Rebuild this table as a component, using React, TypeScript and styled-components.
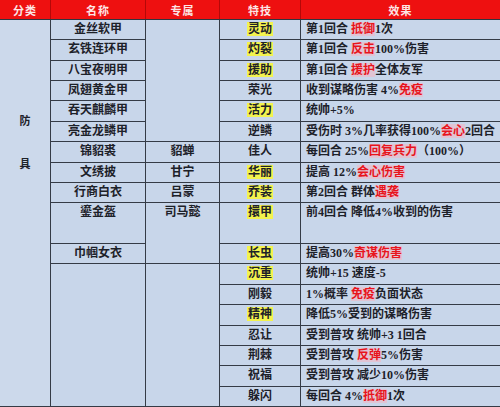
import React from "react";
import styled, { createGlobalStyle } from "styled-components";

const GlobalStyle = createGlobalStyle`
  html, body {
    margin: 0;
    padding: 0;
    background: #c8d6ea;
  }
  body {
    font-family: "Liberation Serif", "Noto Sans CJK SC", serif;
  }
`;

const COLUMNS = "50px 94px 73px 80px 199px";

const Sheet = styled.div`
  width: 500px;
  height: 407px;
  overflow: hidden;
  display: flex;
  flex-direction: column;
`;

const HeaderRow = styled.div`
  display: grid;
  grid-template-columns: ${COLUMNS};
  column-gap: 1px;
  height: 19px;
  background: #b50808;
  border-bottom: 1px solid #2f3540;
`;

const HeadCell = styled.div`
  background: #ee1010;
  color: #fde6e6;
  font-family: "Noto Sans CJK SC", sans-serif;
  font-weight: 700;
  font-size: 11px;
  display: flex;
  align-items: center;
  justify-content: center;
  letter-spacing: 1px;
`;

const Body = styled.div`
  flex: 1;
  display: grid;
  grid-template-columns: ${COLUMNS};
  grid-template-rows: repeat(19, 1fr);
  grid-auto-flow: column dense;
  gap: 1px;
  background: #353b46;
  border-bottom: 1px solid #353b46;
`;

const CategoryCell = styled.div`
  grid-column: 1;
  grid-row: span 19;
  background: #ccd9eb;
  display: flex;
  flex-direction: column;
  align-items: center;
  padding-top: 92px;
  gap: 27px;
  color: #1d2129;
  font-family: "Noto Sans CJK SC", sans-serif;
  font-weight: 700;
  font-size: 11px;
`;

const Cell = styled.div<{ $col: number; $span?: number; $left?: boolean }>`
  grid-column: ${(p) => p.$col};
  grid-row: span ${(p) => p.$span ?? 1};
  background: #c8d6ea;
  color: #1d2129;
  font-weight: 700;
  font-size: 12px;
  line-height: 19px;
  white-space: nowrap;
  text-align: ${(p) => (p.$left ? "left" : "center")};
  padding-left: ${(p) => (p.$left ? "5px" : "0")};
`;

const Trait = styled.span<{ $hl?: boolean }>`
  background: ${(p) => (p.$hl ? "#f3f34e" : "transparent")};
  padding: 0 1px;
`;

const Red = styled.span`
  color: #e8141c;
  background: rgba(255, 175, 185, 0.45);
`;

type Item = { text: string; span?: number };

const gear: Item[] = [
  { text: "金丝软甲" },
  { text: "玄铁连环甲" },
  { text: "八宝夜明甲" },
  { text: "凤翅黄金甲" },
  { text: "吞天麒麟甲" },
  { text: "亮金龙鳞甲" },
  { text: "锦貂裘" },
  { text: "文绣披" },
  { text: "行商白衣" },
  { text: "鎏金盔", span: 2 },
  { text: "巾帼女衣" },
  { text: "", span: 7 },
];

const heroes: Item[] = [
  { text: "", span: 6 },
  { text: "貂蝉" },
  { text: "甘宁" },
  { text: "吕蒙" },
  { text: "司马懿", span: 3 },
  { text: "", span: 7 },
];

// [红字] marks the red highlighted words in an effect
const traits: { name: string; hl?: boolean; effect: string; span?: number }[] = [
  { name: "灵动", hl: true, effect: "第1回合 [抵御]1次" },
  { name: "灼裂", hl: true, effect: "第1回合 [反击]100%伤害" },
  { name: "援助", hl: true, effect: "第1回合 [援护]全体友军" },
  { name: "荣光", effect: "收到谋略伤害 4%[免疫]" },
  { name: "活力", hl: true, effect: "统帅+5%" },
  { name: "逆鳞", effect: "受伤时 3%几率获得100%[会心]2回合" },
  { name: "佳人", effect: "每回合 25%[回复兵力]（100%）" },
  { name: "华丽", hl: true, effect: "提高 12%[会心伤害]" },
  { name: "乔装", hl: true, effect: "第2回合 群体[遇袭]" },
  { name: "擐甲", hl: true, effect: "前4回合 降低4%收到的伤害", span: 2 },
  { name: "长虫", hl: true, effect: "提高30%[奇谋伤害]" },
  { name: "沉重", hl: true, effect: "统帅+15 速度-5" },
  { name: "刚毅", effect: "1%概率 [免疫]负面状态" },
  { name: "精神", hl: true, effect: "降低5%受到的谋略伤害" },
  { name: "忍让", effect: "受到普攻 统帅+3 1回合" },
  { name: "荆棘", effect: "受到普攻 [反弹]5%伤害" },
  { name: "祝福", effect: "受到普攻 减少10%伤害" },
  { name: "躲闪", effect: "每回合 4%[抵御]1次" },
];

const renderEffect = (effect: string) =>
  effect
    .split(/(\[[^\]]+\])/)
    .map((part, i) =>
      part.startsWith("[") ? <Red key={i}>{part.slice(1, -1)}</Red> : part
    );

export default function App() {
  return (
    <Sheet>
      <GlobalStyle />
      <HeaderRow>
        {["分类", "名称", "专属", "特技", "效果"].map((h) => (
          <HeadCell key={h}>{h}</HeadCell>
        ))}
      </HeaderRow>
      <Body>
        <CategoryCell>
          <span>防</span>
          <span>具</span>
        </CategoryCell>
        {gear.map((g, i) => (
          <Cell key={`g${i}`} $col={2} $span={g.span}>
            {g.text}
          </Cell>
        ))}
        {heroes.map((h, i) => (
          <Cell key={`h${i}`} $col={3} $span={h.span}>
            {h.text}
          </Cell>
        ))}
        {traits.map((t) => (
          <Cell key={`t${t.name}`} $col={4} $span={t.span}>
            <Trait $hl={t.hl}>{t.name}</Trait>
          </Cell>
        ))}
        {traits.map((t) => (
          <Cell key={`e${t.name}`} $col={5} $span={t.span} $left>
            {renderEffect(t.effect)}
          </Cell>
        ))}
      </Body>
    </Sheet>
  );
}
